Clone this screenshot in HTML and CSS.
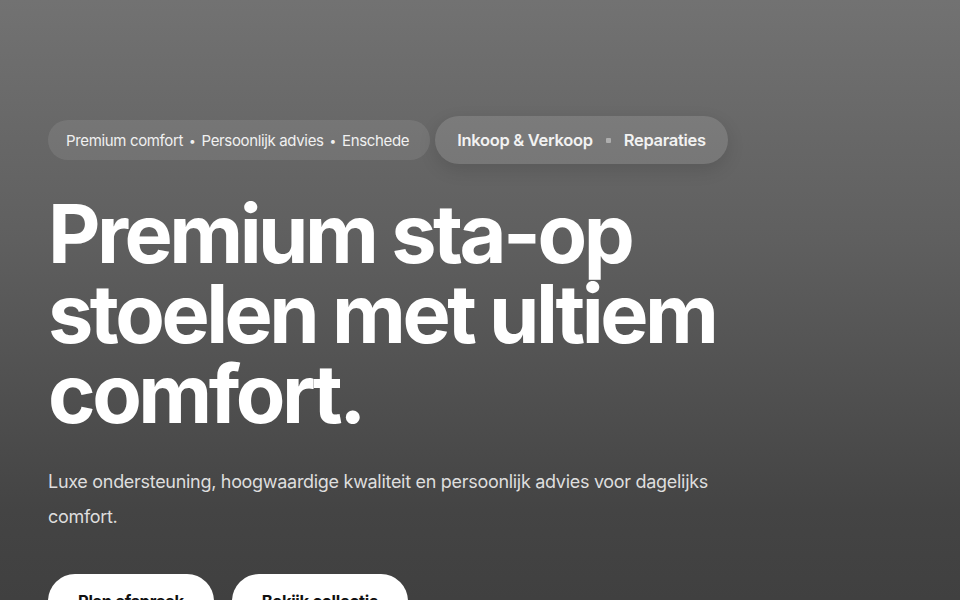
FILE: index.html
```html
<!DOCTYPE html>
<html lang="nl">
<head>
<meta charset="utf-8">
<link rel="stylesheet" href="styles.css">
</head>
<body>
<main class="hero">
  <div class="badges">
    <div class="pill pill-info">
      <span>Premium comfort</span><span class="dot">•</span><span>Persoonlijk advies</span><span class="dot">•</span><span>Enschede</span>
    </div>
    <div class="pill pill-services">
      <span>Inkoop &amp; Verkoop</span><span class="sq"></span><span>Reparaties</span>
    </div>
  </div>
  <h1 class="title">Premium sta-op<br>stoelen met ultiem<br>comfort.</h1>
  <p class="lead">Luxe ondersteuning, hoogwaardige kwaliteit en persoonlijk advies voor dagelijks comfort.</p>
  <div class="actions">
    <a class="btn">Plan afspraak</a>
    <a class="btn">Bekijk collectie</a>
  </div>
</main>
</body>
</html>
```
FILE: styles.css
```css
html, body {
  margin: 0;
  height: 100%;
}
body {
  background: linear-gradient(180deg, #727272 0%, #5f5f5f 40%, #444444 85%, #404040 100%);
  font-family: "Inter", "Noto Sans", sans-serif;
  color: #fff;
  overflow: hidden;
}
.hero {
  padding: 116px 48px 0;
}
.badges {
  display: flex;
  align-items: center;
  gap: 5px;
}
.pill {
  display: flex;
  align-items: center;
  border-radius: 999px;
}
.pill-info {
  height: 40px;
  padding: 0 21px 0 18px;
  background: rgba(255,255,255,0.09);
  font-size: 15px;
  color: #f0f0f0;
  letter-spacing: -0.35px;
}
.pill-info .dot {
  margin: 0 6px;
  font-size: 12px;
}
.pill-services {
  height: 48px;
  padding: 0 22px 0 22px;
  background: rgba(255,255,255,0.12);
  box-shadow: 0 6px 18px rgba(0,0,0,0.12);
  font-size: 16.5px;
  font-weight: 600;
  color: #f2f2f2;
  letter-spacing: -0.3px;
}
.pill-services .sq {
  width: 5px;
  height: 5px;
  border-radius: 1px;
  background: rgba(255,255,255,0.4);
  margin: 0 13px;
}
.title {
  margin: 30px 0 0;
  font-size: 81px;
  line-height: 80px;
  font-weight: 700;
  letter-spacing: -3.5px;
}
.lead {
  margin: 30px 0 0;
  width: 700px;
  font-size: 18px;
  line-height: 35px;
  color: #dedede;
  font-weight: 400;
  letter-spacing: -0.3px;
}
.actions {
  display: flex;
  gap: 18px;
  margin-top: 40px;
}
.btn {
  display: flex;
  align-items: center;
  justify-content: center;
  height: 54px;
  padding: 0 30px;
  background: #fff;
  color: #111;
  border-radius: 27px;
  font-size: 16.5px;
  font-weight: 700;
  letter-spacing: -0.3px;
}
```
